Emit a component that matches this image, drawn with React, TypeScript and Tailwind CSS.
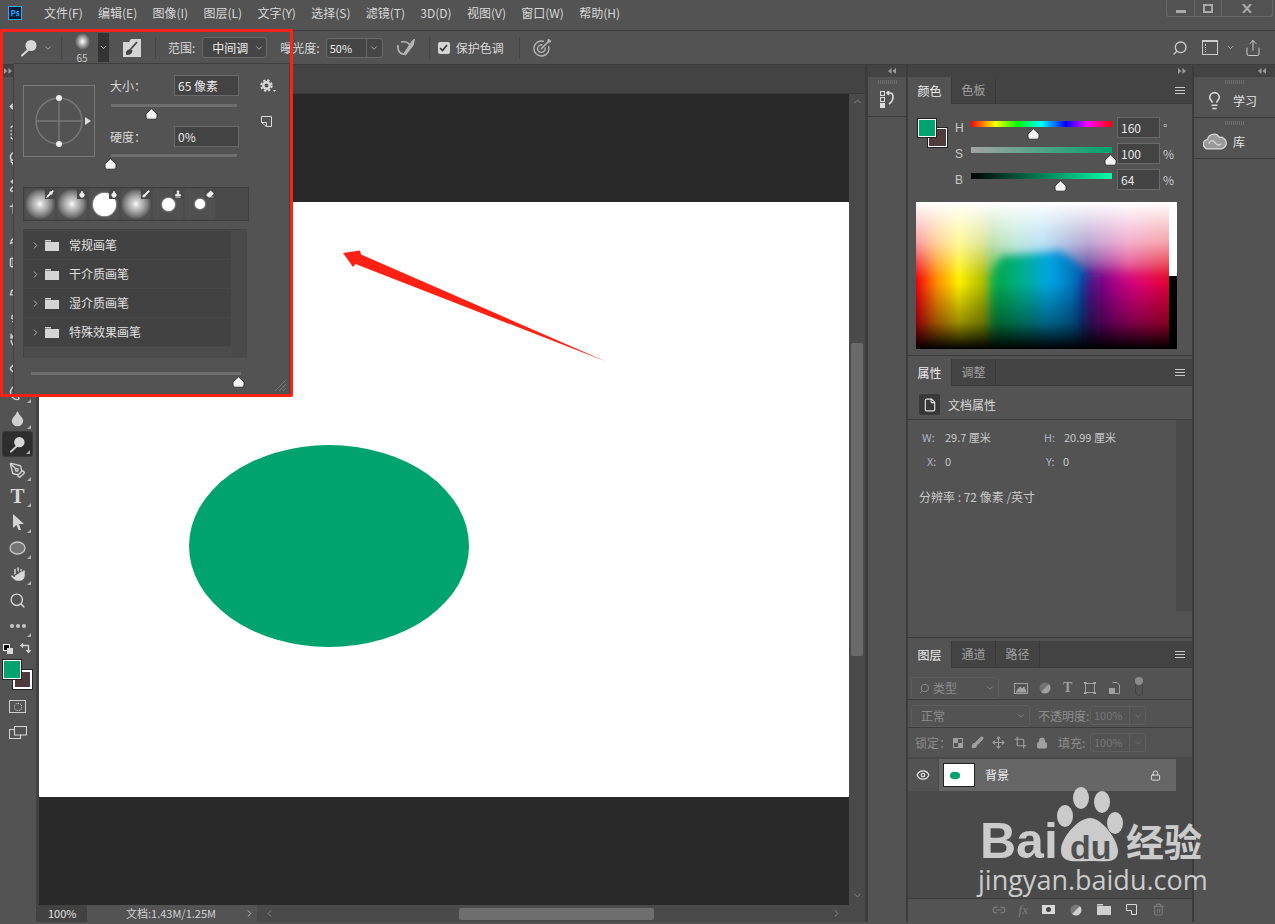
import * as React from "react";
import {
    ChevronDown,
    ChevronRight,
    ChevronLeft,
    ChevronUp,
    Droplet,
    PenTool,
    Hand,
    Search,
    Move,
    SquareDashed,
    Lasso,
    Wand2,
    Crop,
    Pipette,
    Bandage,
    Brush,
    Stamp,
    History,
    Eraser,
    Palette,
    File,
    Lock,
    Eye,
    Link2,
    Trash2,
    Lightbulb,
    Share,
} from "lucide-react";

const menus = ["文件(F)", "编辑(E)", "图像(I)", "图层(L)", "文字(Y)", "选择(S)", "滤镜(T)", "3D(D)", "视图(V)", "窗口(W)", "帮助(H)"];
const upperTools = [Move, SquareDashed, Lasso, Wand2, Crop, Pipette, Bandage, Brush, Stamp, History, Eraser, Palette];
const brushFolders = ["常规画笔", "干介质画笔", "湿介质画笔", "特殊效果画笔"];

const DodgeIcon = ({ size = 18, color = "#d8d8d8" }: { size?: number; color?: string }) => (
    <svg width={size} height={size} viewBox="0 0 18 18">
        <circle cx="11" cy="6.5" r="5.5" fill={color} />
        <path d="M8 11 L2 16.5" stroke={color} strokeWidth="2" strokeLinecap="round" />
    </svg>
);

const ArrowPair = ({ left }: { left?: boolean }) => (
    <svg width="8" height="6" viewBox="0 0 8 6" fill="#9a9a9a" className={left ? "rotate-180" : ""}>
        <path d="M0 0 L3.5 3 L0 6 Z M4.5 0 L8 3 L4.5 6 Z" />
    </svg>
);

const Grip = () => (
    <div className="mx-auto mt-[3px] h-[4px] w-[19px] bg-[repeating-linear-gradient(90deg,#6e6e6e_0_1px,transparent_1px_2px)]" />
);

const Thumb = ({ x, top = 4 }: { x: number; top?: number }) => (
    <svg width="13" height="12" viewBox="0 0 13 12" className="absolute" style={{ left: x - 6, top }}>
        <path d="M6.500 .8 L12 6 V9 Q12 11.200 10 11.200 H3 Q1 11.200 1 9 V6 Z" fill="#f2f2f2" stroke="#222" strokeWidth=".8" />
    </svg>
);

const FolderIcon = ({ color = "#d4d4d4" }: { color?: string }) => (
    <svg width="14" height="11" viewBox="0 0 14 11" fill={color}>
        <path d="M0 0 H6 V1.500 H0 Z M0 2 H14 V11 H0 Z" />
    </svg>
);

const Tool = ({ children, selected, corner = true }: { children: React.ReactNode; selected?: boolean; corner?: boolean }) => (
    <div className={`relative mx-[2px] flex h-[26px] w-[31px] items-center justify-center rounded-[3px] ${selected ? "border border-[#3a3a3a] bg-[#2e2e2e]" : ""}`}>
        {children}
        {corner && (
            <svg width="4" height="4" viewBox="0 0 4 4" className="absolute bottom-[2px] right-[2px]" fill="#b0b0b0">
                <path d="M4 0 V4 H0 Z" />
            </svg>
        )}
    </div>
);

const Tabs = ({ items }: { items: string[] }) => (
    <div className="flex h-[27px] shrink-0 items-stretch border-b border-[#3a3a3a] bg-[#434343]">
        {items.map((t, i) => (
            <div
                key={t}
                className={`flex w-[44px] items-center justify-center border-r border-[#3a3a3a] text-[12px] leading-none ${i === 0 ? "-mb-px bg-[#535353] text-[#f0f0f0]" : "text-[#a0a0a0]"}`}
            >
                {t}
            </div>
        ))}
        <div className="ml-auto mr-[7px] flex flex-col justify-center gap-[2px]">
            <div className="h-px w-[10px] bg-[#c8c8c8]" />
            <div className="h-px w-[10px] bg-[#c8c8c8]" />
            <div className="h-px w-[10px] bg-[#c8c8c8]" />
        </div>
    </div>
);

const Spectrum = () => (
    <svg width="253" height="147" viewBox="0 0 253 147" className="block">
        <defs>
            <linearGradient id="hue">
                <stop offset="0" stopColor="#f00010" />
                <stop offset=".08" stopColor="#ff8a00" />
                <stop offset=".17" stopColor="#fff000" />
                <stop offset=".26" stopColor="#b4c000" />
                <stop offset=".3" stopColor="#60b838" />
                <stop offset=".4" stopColor="#60c4a8" />
                <stop offset=".5" stopColor="#50b4e8" />
                <stop offset=".62" stopColor="#4050a8" />
                <stop offset=".68" stopColor="#502890" />
                <stop offset=".76" stopColor="#a02090" />
                <stop offset=".84" stopColor="#e03080" />
                <stop offset="1" stopColor="#e81020" />
            </linearGradient>
            <linearGradient id="deep">
                <stop offset="0" stopColor="#00a83c" />
                <stop offset=".3" stopColor="#00ae90" />
                <stop offset=".55" stopColor="#00a4e4" />
                <stop offset="1" stopColor="#004a9c" />
            </linearGradient>
            <linearGradient id="mag">
                <stop offset="0" stopColor="#20107f" />
                <stop offset=".3" stopColor="#a0008a" />
                <stop offset=".6" stopColor="#e00074" />
                <stop offset="1" stopColor="#e00020" />
            </linearGradient>
            <linearGradient id="light" x2="0" y2="1">
                <stop offset="0" stopColor="#fff" />
                <stop offset=".28" stopColor="#fff" stopOpacity=".6" />
                <stop offset=".52" stopColor="#fff" stopOpacity="0" />
            </linearGradient>
            <linearGradient id="shade" x2="0" y2="1">
                <stop offset=".55" stopColor="#000" stopOpacity="0" />
                <stop offset=".82" stopColor="#000" stopOpacity=".4" />
                <stop offset="1" stopColor="#000" stopOpacity="1" />
            </linearGradient>
            <filter id="soft" x="-20%" y="-20%" width="140%" height="140%">
                <feGaussianBlur stdDeviation="4" />
            </filter>
            <filter id="softer" x="-20%" y="-20%" width="140%" height="140%">
                <feGaussianBlur stdDeviation="7" />
            </filter>
        </defs>
        <rect width="253" height="147" fill="url(#hue)" />
        <rect width="253" height="147" fill="url(#light)" />
        <path d="M76 160 V80 Q78 58 88 54 Q130 52 142 49 Q158 56 172 72 L180 160 Z" fill="url(#deep)" filter="url(#soft)" />
        <path d="M168 160 V74 Q200 68 260 78 V160 Z" fill="url(#mag)" filter="url(#softer)" />
        <rect width="253" height="147" fill="url(#shade)" />
    </svg>
);

const BrushTip = ({ hard, icon }: { hard?: "big" | "mid" | "small"; icon: React.ReactNode }) => (
    <div className="relative flex h-[30px] w-[30px] items-center justify-center bg-[#505050]">
        {!hard && <div className="h-[30px] w-[30px] rounded-full bg-[radial-gradient(closest-side,#ffffff_0%,#cccccc_25%,#a4a4a4_55%,#7a7a7a_80%,#555555_100%)]" />}
        {hard === "big" && <div className="h-[23px] w-[23px] rounded-full bg-white shadow-[0_0_2px_#fff]" />}
        {hard === "mid" && <div className="h-[13px] w-[13px] rounded-full bg-white shadow-[0_0_2px_#fff]" />}
        {hard === "small" && <div className="h-[10px] w-[10px] rounded-full bg-white shadow-[0_0_2px_#fff]" />}
        <div className="absolute right-0 top-0 flex h-[10px] w-[10px] items-center justify-center bg-[#484848]">{icon}</div>
    </div>
);

const Input = ({ children, className = "" }: { children: React.ReactNode; className?: string }) => (
    <div className={`flex items-center border border-[#6a6a6a] bg-[#434343] pl-[3px] text-[12px] leading-none text-[#e8e8e8] ${className}`}>{children}</div>
);

const DimSelect = ({ value }: { value: string }) => (
    <div className="flex h-[19px] w-[56px] items-center rounded-[3px] border border-[#5e5e5e] text-[11px] leading-none text-[#767676]">
        <span className="w-[39px] border-r border-[#5e5e5e] pl-[3px] leading-[17px]">{value}</span>
        <ChevronDown size={10} className="mx-auto text-[#767676]" />
    </div>
);

const BrushPopup = () => (
    <div className="absolute left-[13px] top-[63px] flex h-[332px] w-[277px] flex-col border border-[#404040] bg-[#535353] pl-[9px] pt-[11px] text-[12px] leading-none text-[#d8d8d8]">
        <div className="flex">
            <svg width="73" height="73" viewBox="0 0 73 73" className="mt-[10px] shrink-0">
                <rect x=".5" y=".5" width="71" height="71" fill="none" stroke="#7a7a7a" />
                <circle cx="36" cy="36" r="23" fill="none" stroke="#777" strokeWidth="1.5" />
                <path d="M36 13 V59 M13 36 H59" stroke="#777" strokeWidth="1.5" />
                <circle cx="36" cy="13" r="3" fill="#eee" />
                <circle cx="36" cy="59" r="3" fill="#eee" />
                <path d="M62 32 L68 36 L62 40 Z" fill="#ddd" />
            </svg>
            <div className="ml-[14px] w-[129px]">
                <div className="flex h-[21px] items-center justify-between">
                    <span>大小：</span>
                    <Input className="h-[21px] w-[65px]">65 像素</Input>
                </div>
                <div className="relative mt-[8px] ml-px h-[3px] w-[126px] bg-[#6e6e6e]">
                    <Thumb x={40} />
                </div>
                <div className="mt-[19px] flex h-[21px] items-center justify-between">
                    <span>硬度：</span>
                    <Input className="h-[21px] w-[65px]">0%</Input>
                </div>
                <div className="relative mt-[7px] ml-px h-[3px] w-[126px] bg-[#6e6e6e]">
                    <Thumb x={-1} />
                </div>
            </div>
            <div className="ml-[21px] flex flex-col items-start gap-[24px] pt-[4px]">
                <div className="flex items-end">
                    <svg width="13" height="13" viewBox="0 0 13 13" fill="none" stroke="#d8d8d8">
                        <circle cx="6.500" cy="6.500" r="3.200" strokeWidth="2.400" />
                        <circle cx="6.500" cy="6.500" r="5.200" strokeWidth="2" strokeDasharray="2.400 1.700" />
                    </svg>
                    <svg width="3" height="2" viewBox="0 0 3 2" fill="#d8d8d8"><path d="M0 0 H3 L1.500 2 Z" /></svg>
                </div>
                <svg width="11" height="11" viewBox="0 0 11 11" fill="none" stroke="#d8d8d8" className="ml-px">
                    <path d="M.5 .5 H10.500 V10.500 H5.500 V6.500 H.5 Z M.5 6.500 L5.500 10.500" />
                </svg>
            </div>
        </div>
        <div className="mt-[29px] flex h-[34px] w-[226px] gap-[2px] border border-[#3e3e3e] bg-[#4a4a4a] p-px">
            <BrushTip icon={<Pipette size={8} fill="#eee" stroke="#eee" />} />
            <BrushTip icon={<Droplet size={8} fill="#eee" stroke="#eee" />} />
            <BrushTip hard="big" icon={<Droplet size={8} fill="#eee" stroke="#eee" />} />
            <BrushTip icon={<Brush size={8} fill="#eee" stroke="#eee" />} />
            <BrushTip hard="mid" icon={<Stamp size={8} fill="#eee" stroke="#eee" />} />
            <BrushTip hard="small" icon={<Eraser size={8} fill="#eee" stroke="#eee" />} />
        </div>
        <div className="mt-[8px] flex h-[129px] w-[224px] border-l border-t border-[#444]">
            <div className="flex w-[208px] flex-col gap-px bg-[#484848] pt-px">
                {brushFolders.map((name) => (
                    <div key={name} className="flex h-[28px] items-center bg-[#424242] pl-[6px] text-[#e0e0e0]">
                        <ChevronRight size={11} className="text-[#b8b8b8]" />
                        <div className="ml-[4px]">
                            <FolderIcon />
                        </div>
                        <span className="ml-[10px]">{name}</span>
                    </div>
                ))}
                <div className="flex-1 bg-[#4b4b4b]" />
            </div>
            <div className="ml-0 w-[16px] bg-[#4a4a4a]" />
        </div>
        <div className="relative mt-[14px] ml-[8px] h-[3px] w-[210px] bg-[#6e6e6e]">
            <Thumb x={207} />
        </div>
        <svg width="13" height="13" viewBox="0 0 13 13" className="absolute bottom-[2px] right-[2px]" stroke="#777">
            <path d="M1 12 L12 1 M5 12 L12 5 M9 12 L12 9" />
        </svg>
    </div>
);

const Watermark = () => (
    <div className="absolute left-[976px] top-[785px] h-[115px] w-[240px] text-[#cbcbcb]">
        <svg width="240" height="90" viewBox="0 0 240 90" className="absolute left-0 top-0">
            <g fill="#cbcbcb" transform="translate(-976 -785)">
                <ellipse cx="1081" cy="798" rx="8" ry="11" />
                <ellipse cx="1102" cy="802" rx="8" ry="11" />
                <ellipse cx="1065" cy="816" rx="8" ry="11" />
                <ellipse cx="1115" cy="823" rx="8" ry="11" />
                <path d="M1090 818 C1102 818 1118 840 1118 851 C1118 864 1105 861 1090 861 C1075 861 1061 864 1061 850 C1061 838 1078 818 1090 818 Z" />
            </g>
        </svg>
        <span className="absolute left-[4px] top-[31px] font-['Liberation_Sans',sans-serif] text-[50px] font-bold leading-[50px]">Bai</span>
        <span className="absolute left-[94px] top-[45px] font-['Liberation_Sans',sans-serif] text-[34px] font-bold leading-[34px] text-[#4f4f4f]">du</span>
        <span className="absolute left-[150px] top-[33px] text-[38px] font-bold leading-[44px]">经验</span>
        <span className="absolute left-[2px] top-[77px] whitespace-nowrap font-['Open_Sans',sans-serif] text-[27px] leading-[36px]">jingyan.baidu.com</span>
    </div>
);

export default function App() {
    return (
        <div className="relative flex h-[924px] w-[1275px] flex-col overflow-hidden bg-[#535353] font-['Noto_Sans_CJK_SC','Liberation_Sans',sans-serif] text-[12px] leading-none text-[#d8d8d8]">
            {/* menu bar */}
            <div className="flex h-[30px] shrink-0 items-start">
                <div className="ml-[8px] mt-[6px] flex h-[14px] w-[14px] items-center justify-center border border-[#31a8ff] bg-[#001e36] text-[8px] font-bold text-[#31a8ff]">Ps</div>
                <div className="ml-[22px] mt-[7px] flex gap-[15.3px] whitespace-nowrap">
                    {menus.map((m) => (
                        <span key={m}>{m}</span>
                    ))}
                </div>
                <div className="ml-auto mr-[2px] flex h-[17px] w-[107px] rounded-b-[3px] border-x border-b border-[#686868] text-[#aaa]">
                    <div className="flex w-[28px] items-end justify-center border-r border-[#686868] pb-[3px]">
                        <div className="h-[3px] w-[10px] bg-[#aaa]" />
                    </div>
                    <div className="flex w-[27px] items-center justify-center border-r border-[#686868]">
                        <div className="h-[9px] w-[10px] border-2 border-[#aaa]" />
                    </div>
                    <div className="flex flex-1 items-center justify-center">
                        <svg width="10" height="9" viewBox="0 0 10 9" stroke="#aaa" strokeWidth="2"><path d="M1 0 L9 9 M9 0 L1 9" /></svg>
                    </div>
                </div>
            </div>

            {/* options bar */}
            <div className="flex h-[35px] shrink-0 items-center border-y border-[#3c3c3c]">
                <div className="ml-[20px]">
                    <DodgeIcon />
                </div>
                <ChevronDown size={10} className="ml-[5px] text-[#bbb]" />
                <div className="ml-[8px] h-[22px] w-px bg-[#444]" />
                <div className="ml-[9px] flex w-[22px] flex-col items-center">
                    <div className="h-[17px] w-[15px] rounded-full bg-[radial-gradient(closest-side,#fff_0%,#aaa_50%,#555_100%)]" />
                    <span className="mt-[3px] text-[10px] text-[#c8c8c8]">65</span>
                </div>
                <div className="ml-[5px] flex h-[29px] w-[11px] items-center justify-center bg-[#333]">
                    <ChevronDown size={9} className="text-[#ddd]" />
                </div>
                <svg width="18" height="18" viewBox="0 0 18 18" className="ml-[14px]">
                    <path d="M0 3 H6 L8 0 V0 H18 V18 H0 Z" fill="#d4d4d4" />
                    <path d="M14 3 L7 11 M7 11 Q3 12 4 15 Q8 15 8.500 12 Z" stroke="#444" strokeWidth="1.800" fill="#444" />
                </svg>
                <div className="ml-[14px] h-[22px] w-px bg-[#444]" />
                <span className="ml-[12px]">范围:</span>
                <div className="ml-[7px] flex h-[21px] w-[65px] items-center rounded-[3px] border border-[#6a6a6a] bg-[#454545] pl-[9px] text-[#eee]">
                    中间调
                    <ChevronDown size={10} className="ml-[6px] text-[#bbb]" />
                </div>
                <span className="ml-[13px]">曝光度:</span>
                <div className="ml-[6px] flex h-[20px] w-[57px] items-center rounded-[3px] border border-[#6a6a6a] bg-[#454545]">
                    <span className="w-[40px] border-r border-[#6a6a6a] pl-[3px] text-[11px] leading-[18px] text-[#eee]">50%</span>
                    <ChevronDown size={10} className="mx-auto text-[#bbb]" />
                </div>
                <svg width="20" height="18" viewBox="0 0 20 18" fill="none" stroke="#b4b4b4" strokeWidth="1.600" className="ml-[13px]">
                    <path d="M2 6 C1 12 5 16 9 15 M5 3 C10 2 14 4 14 8" />
                    <path d="M8 15 L16 3 L18 1 L17 6 L9 16" fill="#b4b4b4" />
                </svg>
                <div className="ml-[13px] h-[22px] w-px bg-[#444]" />
                <div className="ml-[8px] flex h-[12px] w-[12px] items-center justify-center rounded-[2px] bg-[#d4d4d4]">
                    <svg width="9" height="8" viewBox="0 0 9 8" fill="none" stroke="#333" strokeWidth="1.600"><path d="M1 4 L3.500 6.500 L8 1" /></svg>
                </div>
                <span className="ml-[6px]">保护色调</span>
                <div className="ml-[15px] h-[22px] w-px bg-[#444]" />
                <svg width="18" height="18" viewBox="0 0 18 18" fill="none" stroke="#b4b4b4" strokeWidth="1.400" className="ml-[13px]">
                    <path d="M11 2.500 A7.500 7.500 0 1 0 15.500 7 M9.500 6 A3.800 3.800 0 1 0 12 8.500" />
                    <path d="M8 10 L15 3 L15.500 .500 L17.500 2.500 L15 3" strokeWidth="1.600" />
                </svg>
                <div className="ml-auto flex items-center">
                    <Search size={16} className="-scale-x-100 text-[#ccc]" />
                    <div className="ml-[14px] flex h-[15px] w-[16px] items-center border border-[#ccc] border-t-2 pl-px">
                        <div className="h-[8px] w-[2px] border-r border-dotted border-[#ccc]" />
                    </div>
                    <ChevronDown size={9} className="ml-[8px] text-[#ccc]" />
                    <Share size={18} strokeWidth={1.300} className="ml-[9px] mr-[13px] text-[#ccc]" />
                </div>
            </div>

            {/* main */}
            <div className="flex min-h-0 flex-1 pb-[2px]">
                {/* tools */}
                <div className="flex h-full w-[39px] shrink-0 flex-col border-r-[3px] border-[#424242]">
                    <div className="flex h-[12px] shrink-0 items-center bg-[#424242] pl-[4px]">
                        <ArrowPair />
                    </div>
                    <div className="pt-[16px]">
                        {upperTools.map((Icon, i) => (
                            <Tool key={i}>
                                <Icon size={17} className="text-[#d0d0d0]" />
                            </Tool>
                        ))}
                        <Tool><Droplet size={17} fill="#d0d0d0" className="text-[#d0d0d0]" /></Tool>
                        <Tool selected><DodgeIcon size={17} /></Tool>
                        <Tool><PenTool size={17} className="text-[#d0d0d0]" /></Tool>
                        <Tool><span className="font-['Liberation_Serif',serif] text-[21px] font-bold leading-none text-[#d8d8d8]">T</span></Tool>
                        <Tool>
                            <svg width="12" height="16" viewBox="0 0 12 16" fill="#d4d4d4"><path d="M1 0 L12 10 H7 L9 16 L6.500 16 L4.500 11 L1 14 Z" /></svg>
                        </Tool>
                        <Tool>
                            <svg width="17" height="14" viewBox="0 0 17 14"><ellipse cx="8.500" cy="7" rx="7.500" ry="6" fill="#757575" stroke="#c8c8c8" strokeWidth="1.300" /></svg>
                        </Tool>
                        <Tool><Hand size={18} fill="#d8d8d8" stroke="#555" className="text-[#d8d8d8]" /></Tool>
                        <Tool corner={false}><Search size={17} className="text-[#d4d4d4]" /></Tool>
                        <Tool>
                            <div className="flex gap-[2px]">
                                <div className="h-[4px] w-[4px] rounded-full bg-[#c8c8c8]" />
                                <div className="h-[4px] w-[4px] rounded-full bg-[#c8c8c8]" />
                                <div className="h-[4px] w-[4px] rounded-full bg-[#c8c8c8]" />
                            </div>
                        </Tool>
                        <div className="flex h-[14px] items-center pl-[3px] pt-[5px]">
                            <div className="relative h-[10px] w-[10px]">
                                <div className="h-[7px] w-[7px] border border-white bg-black" />
                                <div className="absolute bottom-0 right-0 -z-0 h-[6px] w-[6px] bg-[#d8d8d8]" />
                            </div>
                            <svg width="11" height="11" viewBox="0 0 11 11" fill="none" stroke="#d0d0d0" strokeWidth="1.400" className="ml-[7px]">
                                <path d="M3 0.500 L1 2.500 L3 4.500 M1 2.500 H8.500 V9 M6.500 7 L8.500 9.500 L10.500 7" />
                            </svg>
                        </div>
                        <div className="relative mt-[7px] h-[29px]">
                            <div className="absolute left-[13px] top-[10px] h-[19px] w-[19px] border-2 border-white bg-[#4f3b3b] outline outline-1 outline-[#222]" />
                            <div className="absolute left-[3px] top-0 h-[19px] w-[18px] border border-white bg-[#00a36d] outline outline-1 outline-[#222]" />
                        </div>
                        <div className="flex h-[35px] items-center pl-[9px]">
                            <div className="flex h-[13px] w-[17px] items-center justify-center border border-[#d0d0d0]">
                                <div className="h-[8px] w-[8px] rounded-full border border-dotted border-[#e0e0e0]" />
                            </div>
                        </div>
                        <div className="relative flex h-[17px] items-center pl-[9px]">
                            <svg width="18" height="13" viewBox="0 0 18 13" fill="none" stroke="#d0d0d0" strokeWidth="1.100">
                                <rect x=".5" y="3.500" width="11" height="9" />
                                <rect x="5.500" y=".5" width="12" height="8.500" fill="#535353" />
                            </svg>
                        </div>
                    </div>
                </div>

                {/* document */}
                <div className="flex h-full w-[829px] shrink-0 flex-col border-r-[3px] border-[#3c3c3c]">
                    <div className="h-[29px] shrink-0 border-b border-[#3a3a3a] bg-[#434343]" />
                    <div className="flex min-h-0 flex-1">
                        <div className="flex flex-1 flex-col bg-[#292929]">
                            <div className="mt-[108px] h-[595px] bg-white pl-[150px] pt-[243px]">
                                <div className="h-[202px] w-[280px] rounded-[50%] bg-[#00a36d]" />
                            </div>
                        </div>
                        <div className="relative flex w-[16px] flex-col items-center bg-[#4a4a4a]">
                            <ChevronUp size={11} className="mt-[2px] text-[#8a8a8a]" />
                            <div className="mt-[236px] h-[313px] w-[12px] rounded-[2px] bg-[#6a6a6a]" />
                            <ChevronDown size={11} className="mt-auto mb-[4px] text-[#8a8a8a]" />
                        </div>
                    </div>
                    <div className="flex h-[17px] shrink-0 items-center bg-[#4a4a4a]">
                        <span className="flex h-full w-[48px] items-center bg-[#424242] pl-[9px] text-[11px] text-[#e0e0e0]">100%</span>
                        <span className="flex h-full w-[170px] items-center bg-[#535353] pl-[39px] text-[11px] text-[#d0d0d0]">文档:1.43M/1.25M</span>
                        <ChevronRight size={11} className="-ml-[13px] text-[#c0c0c0]" />
                        <ChevronLeft size={11} className="ml-[9px] text-[#8a8a8a]" />
                        <div className="ml-[184px] h-[12px] w-[195px] rounded-[2px] bg-[#6e6e6e]" />
                        <ChevronRight size={11} className="ml-auto mr-[23px] text-[#8a8a8a]" />
                    </div>
                </div>

                {/* collapsed panel column */}
                <div className="flex w-[40px] shrink-0 flex-col border-r-2 border-[#3c3c3c]">
                    <div className="flex h-[12px] items-center justify-end bg-[#434343] pr-[10px]">
                        <ArrowPair left />
                    </div>
                    <div className="h-[40px] border-b border-[#3c3c3c]">
                        <Grip />
                        <div className="mt-[7px] flex justify-center gap-px">
                            <div className="flex flex-col gap-px">
                                <div className="h-[5px] w-[5px] border border-[#ddd]" />
                                <div className="h-[5px] w-[5px] border border-[#ddd]" />
                                <div className="h-[5px] w-[5px] bg-[#ddd]" />
                            </div>
                            <svg width="8" height="14" viewBox="0 0 8 14" fill="none" stroke="#ddd" strokeWidth="1.600">
                                <path d="M1 2 H4 Q7 2 7 6 Q7 10 3 13 M3 0 L1 2 L3 4" />
                            </svg>
                        </div>
                    </div>
                </div>

                {/* panels */}
                <div className="flex w-[286px] shrink-0 flex-col border-r-2 border-[#3c3c3c]">
                    <div className="flex h-[12px] shrink-0 items-center justify-end bg-[#434343] pr-[6px]">
                        <ArrowPair />
                    </div>

                    {/* colour */}
                    <div className="h-[279px] shrink-0 border-b border-[#3c3c3c]">
                        <Tabs items={["颜色", "色板"]} />
                        <div className="flex pl-[8px] pt-[13px]">
                            <div className="relative h-[29px] w-[31px] shrink-0">
                                <div className="absolute left-[12px] top-[11px] h-[19px] w-[19px] border border-white bg-[#4f3b3b] outline outline-1 outline-[#222]" />
                                <div className="absolute left-[2px] top-[2px] h-[18px] w-[18px] border border-white bg-[#00a36d] outline outline-1 outline-[#222]" />
                            </div>
                            <div className="ml-[8px] flex flex-col gap-[5px]">
                                {[
                                    { label: "H", value: "160", unit: "°", x: 62, bar: "bg-[linear-gradient(90deg,#f00,#ff0_17%,#0f0_33%,#0ff_50%,#00f_67%,#f0f_83%,#f00)]" },
                                    { label: "S", value: "100", unit: "%", x: 139, bar: "bg-[linear-gradient(90deg,#a3a3a3,#00a36d)]" },
                                    { label: "B", value: "64", unit: "%", x: 89, bar: "bg-[linear-gradient(90deg,#000,#00ffaa)]" },
                                ].map((row) => (
                                    <div key={row.label} className="flex h-[21px] items-center">
                                        <span className="w-[16px] font-['Liberation_Sans',sans-serif] text-[12px] text-[#c8c8c8]">{row.label}</span>
                                        <div className={`relative mb-[8px] h-[6px] w-[141px] ${row.bar}`}>
                                            <Thumb x={row.x} top={7} />
                                        </div>
                                        <Input className="ml-[5px] h-[21px] w-[43px]">{row.value}</Input>
                                        <span className="ml-[3px] text-[#c8c8c8]">{row.unit}</span>
                                    </div>
                                ))}
                            </div>
                        </div>
                        <div className="ml-[8px] mt-[12px] flex w-[261px]">
                            <Spectrum />
                            <div className="w-[8px]">
                                <div className="h-[74px] bg-white" />
                                <div className="h-[73px] bg-black" />
                            </div>
                        </div>
                    </div>

                    {/* properties */}
                    <div className="mt-[3px] flex h-[279px] shrink-0 flex-col border-b border-[#3c3c3c]">
                        <Tabs items={["属性", "调整"]} />
                        <div className="flex h-[34px] shrink-0 items-center border-b border-[#3c3c3c] pl-[10px] pt-[4px]">
                            <div className="flex h-[23px] w-[23px] items-center justify-center rounded-[3px] border border-[#555] bg-[#383838]">
                                <File size={14} className="text-[#e0e0e0]" />
                            </div>
                            <span className="ml-[7px]">文档属性</span>
                        </div>
                        <div className="flex flex-1">
                            <div className="flex h-[191px] flex-1 flex-col pl-[14px] pt-[11px] text-[11px] text-[#c8c8c8]">
                                <div className="flex h-[12px] items-center">
                                    <span className="w-[23px] text-[#a8b4c4]">W:</span>
                                    <span className="w-[99px]">29.7 厘米</span>
                                    <span className="w-[20px] text-[#a8b4c4]">H:</span>
                                    <span>20.99 厘米</span>
                                </div>
                                <div className="mt-[12px] flex h-[12px] items-center">
                                    <span className="w-[23px] pl-[5px] text-[#a8b4c4]">X:</span>
                                    <span className="w-[101px]">0</span>
                                    <span className="w-[17px] text-[#a8b4c4]">Y:</span>
                                    <span>0</span>
                                </div>
                                <div className="-ml-[3px] mt-[24px] text-[12px]">分辨率 : 72 像素 /英寸</div>
                            </div>
                            <div className="h-[191px] w-[16px] bg-[#4a4a4a]" />
                        </div>
                    </div>

                    {/* layers */}
                    <div className="mt-[3px] flex min-h-0 flex-1 flex-col text-[#8c8c8c]">
                        <Tabs items={["图层", "通道", "路径"]} />
                        <div className="flex h-[32px] shrink-0 items-center border-b border-[#3c3c3c] pl-[3px] pt-[9px]">
                            <div className="flex h-[22px] w-[88px] items-center rounded-[3px] border border-[#5e5e5e] pl-[7px]">
                                <Search size={11} className="-scale-x-100" />
                                <span className="ml-[3px]">类型</span>
                                <ChevronDown size={10} className="ml-auto mr-[3px]" />
                            </div>
                            <svg width="14" height="11" viewBox="0 0 14 11" className="ml-[15px]" fill="none" stroke="#a0a0a0"><rect x=".5" y=".5" width="13" height="10" /><path d="M2 9 L6 4 L8 6 L10 4 L12 9 Z" fill="#a0a0a0" /></svg>
                            <svg width="12" height="12" viewBox="0 0 12 12" className="ml-[11px]"><circle cx="6" cy="6" r="5.500" fill="#a0a0a0" /><path d="M6 6 L11 1 A6 6 0 0 0 1 11 Z" fill="#535353" opacity=".6" /></svg>
                            <span className="ml-[12px] font-['Liberation_Serif',serif] text-[14px] font-bold text-[#a0a0a0]">T</span>
                            <svg width="12" height="12" viewBox="0 0 12 12" className="ml-[12px]" fill="none" stroke="#a0a0a0"><rect x="1.500" y="1.500" width="9" height="9" /><path d="M0 1 H3 M0 11 H3 M9 1 H12 M9 11 H12" strokeWidth="2" /></svg>
                            <svg width="11" height="12" viewBox="0 0 11 12" className="ml-[13px]" fill="none" stroke="#a0a0a0"><path d="M3.500 .5 H8 L10.500 3 V11.500 H5" /><rect x=".5" y="6.500" width="5" height="5" fill="#a0a0a0" /></svg>
                            <div className="relative ml-[15px] h-[15px] w-[8px] rounded-full border border-[#444]">
                                <div className="absolute -left-px -top-[5px] h-[8px] w-[8px] rounded-full bg-[#8c8c8c]" />
                            </div>
                        </div>
                        <div className="flex h-[28px] shrink-0 items-center border-b border-[#3c3c3c] pl-[3px] pt-[4px]">
                            <div className="flex h-[22px] w-[119px] items-center rounded-[3px] border border-[#5e5e5e] pl-[9px]">
                                正常
                                <ChevronDown size={10} className="ml-auto mr-[3px]" />
                            </div>
                            <span className="ml-[8px] w-[56px]">不透明度:</span>
                            <div className="-ml-[4px]">
                                <DimSelect value="100%" />
                            </div>
                        </div>
                        <div className="flex h-[29px] shrink-0 items-center pl-[7px]">
                            <span className="w-[36px]">锁定：</span>
                            <svg width="10" height="10" viewBox="0 0 10 10" className="ml-[2px]" fill="#a0a0a0"><path d="M0 0 H5 V5 H0 Z M5 5 H10 V10 H5 Z" /><rect x=".5" y=".5" width="9" height="9" fill="none" stroke="#a0a0a0" /></svg>
                            <Brush size={13} fill="#a0a0a0" className="ml-[8px] text-[#a0a0a0]" />
                            <Move size={13} className="ml-[8px] text-[#a0a0a0]" />
                            <Crop size={13} className="ml-[9px] text-[#a0a0a0]" />
                            <Lock size={12} fill="#a0a0a0" className="ml-[9px] text-[#a0a0a0]" />
                            <span className="ml-[10px] w-[28px]">填充:</span>
                            <div className="ml-[4px]">
                                <DimSelect value="100%" />
                            </div>
                        </div>
                        <div className="flex min-h-0 flex-1">
                            <div className="flex min-h-0 flex-1 flex-col bg-[#4a4a4a]">
                                <div className="mt-[2px] flex h-[32px] shrink-0 items-center">
                                    <div className="flex h-full w-[30px] items-center justify-center bg-[#535353]">
                                        <Eye size={14} fill="#535353" strokeWidth={2} className="text-[#e8e8e8]" />
                                    </div>
                                    <div className="flex h-full flex-1 items-center border-l border-[#4a4a4a] bg-[#666] pl-[4px] text-[#f0f0f0]">
                                        <div className="flex h-[24px] w-[32px] items-center border border-[#222] bg-white pl-[6px]">
                                            <div className="h-[7px] w-[10px] rounded-full bg-[#00a36d]" />
                                        </div>
                                        <span className="ml-[10px]">背景</span>
                                        <Lock size={11} className="ml-auto mr-[15px] text-[#e0e0e0]" />
                                    </div>
                                </div>
                            </div>
                            <div className="w-[16px] bg-[#4a4a4a]" />
                        </div>
                        <div className="flex h-[24px] shrink-0 items-center justify-end border-t border-[#3c3c3c] pb-[2px] pr-[27px] text-[#7c7c7c]">
                            <Link2 size={14} />
                            <span className="ml-[13px] font-['Liberation_Serif',serif] text-[13px] italic">fx</span>
                            <div className="ml-[14px] flex h-[9px] w-[13px] items-center justify-center bg-[#d8d8d8]">
                                <div className="h-[5px] w-[5px] rounded-full bg-[#444]" />
                            </div>
                            <svg width="12" height="12" viewBox="0 0 12 12" className="ml-[15px]"><circle cx="6" cy="6" r="5.500" fill="#d0d0d0" /><path d="M6 6 L11 1 A6 6 0 0 0 1 11 Z" fill="#535353" opacity=".7" /></svg>
                            <div className="ml-[15px]">
                                <FolderIcon color="#d0d0d0" />
                            </div>
                            <svg width="11" height="11" viewBox="0 0 11 11" fill="none" stroke="#d8d8d8" className="ml-[15px]"><path d="M.5 .5 H10.500 V10.500 H5.500 V6.500 H.5 Z" /></svg>
                            <Trash2 size={13} className="ml-[15px]" />
                        </div>
                    </div>
                </div>

                {/* learn column */}
                <div className="flex flex-1 flex-col">
                    <div className="flex h-[12px] items-center justify-end bg-[#434343] pr-[9px]">
                        <ArrowPair left />
                    </div>
                    <div className="h-[41px] border-b border-[#3c3c3c]">
                        <Grip />
                        <div className="mt-[7px] flex items-center pl-[11px]">
                            <Lightbulb size={19} className="text-[#d8d8d8]" />
                            <span className="ml-[9px] text-[#e4e4e4]">学习</span>
                        </div>
                    </div>
                    <div className="h-[41px] border-b border-[#3c3c3c]">
                        <Grip />
                        <div className="mt-[8px] flex items-center pl-[9px]">
                            <svg width="24" height="17" viewBox="0 0 22 16" fill="#999" stroke="#d8d8d8" strokeWidth="1.200">
                                <path d="M5 15 A4.500 4.500 0 0 1 4 6 A6 6 0 0 1 15 4 A5.500 5.500 0 0 1 17 15 Z" />
                                <path d="M5 10 Q8 5 11 9 T17 10" fill="none" />
                            </svg>
                            <span className="ml-[6px] text-[#e4e4e4]">库</span>
                        </div>
                    </div>
                </div>
            </div>

            <BrushPopup />

            {/* annotations on top of the screenshot */}
            <div className="absolute left-0 top-[29px] h-[368px] w-[293px] rounded-[2px] border-[3px] border-[#ff2113]" />
            <svg width="1275" height="924" className="pointer-events-none absolute left-0 top-0">
                <polygon points="343,253 360,250.500 361,254.500 606,361.500 355.500,264 353,267" fill="#ff2113" />
            </svg>
            <Watermark />
        </div>
    );
}
